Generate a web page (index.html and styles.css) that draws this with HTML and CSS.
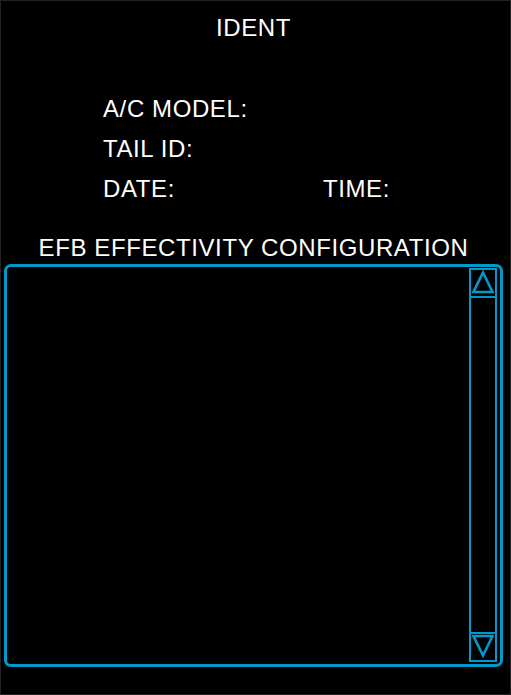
FILE: index.html
```html
<!DOCTYPE html>
<html>
<head>
<meta charset="utf-8">
<link rel="stylesheet" href="styles.css">
</head>
<body>
<div class="screen">
  <div class="title">IDENT</div>
  <div class="info">
    <div class="row"><span class="label">A/C MODEL:</span></div>
    <div class="row"><span class="label">TAIL ID:</span></div>
    <div class="row two"><span class="label">DATE:</span><span class="label">TIME:</span></div>
  </div>
  <div class="heading">EFB EFFECTIVITY CONFIGURATION</div>
  <div class="panel">
    <div class="list"></div>
    <div class="scrollbar">
      <div class="btn up">
        <svg width="22" height="24" viewBox="0 0 22 24"><polygon points="11,2.5 20.5,22 1.5,22" fill="none" stroke="#0099cc" stroke-width="2.6" stroke-linejoin="miter"/></svg>
      </div>
      <div class="track"></div>
      <div class="btn down">
        <svg width="22" height="24" viewBox="0 0 22 24"><polygon points="1.5,2 20.5,2 11,21.5" fill="none" stroke="#0099cc" stroke-width="2.6" stroke-linejoin="miter"/></svg>
      </div>
    </div>
  </div>
</div>
</body>
</html>
```
FILE: styles.css
```css
html, body {
  margin: 0;
  padding: 0;
  background: #000;
}
.screen {
  width: 511px;
  height: 695px;
  box-sizing: border-box;
  border: 1px solid #222;
  background: #000;
  color: #fff;
  font-family: "Liberation Sans", Arial, sans-serif;
  font-size: 24px;
  letter-spacing: 0.6px;
  display: flex;
  flex-direction: column;
}
.title {
  margin-top: 13px;
  padding-right: 4px;
  line-height: 28px;
  text-align: center;
}
.info {
  margin-top: 47px;
  padding-left: 102px;
}
.row {
  height: 40px;
  line-height: 40px;
  display: grid;
  grid-template-columns: 220px auto;
}
.heading {
  margin-top: 25px;
  padding-right: 4px;
  line-height: 28px;
  text-align: center;
}
.panel {
  margin: 2px 7px 0 3px;
  height: 403px;
  box-sizing: border-box;
  border: 3px solid #0099cc;
  border-radius: 7px;
  display: flex;
}
.list {
  flex: 1;
}
.scrollbar {
  width: 28px;
  box-sizing: border-box;
  margin: 1px 3px 2px 0;
  border: 2px solid #0099cc;
  display: flex;
  flex-direction: column;
}
.btn {
  height: 26px;
  display: flex;
  justify-content: center;
}
.btn svg {
  display: block;
}
.btn.up {
  border-bottom: 2px solid #0099cc;
}
.btn.down {
  border-top: 2px solid #0099cc;
}
.track {
  flex: 1;
}
```
